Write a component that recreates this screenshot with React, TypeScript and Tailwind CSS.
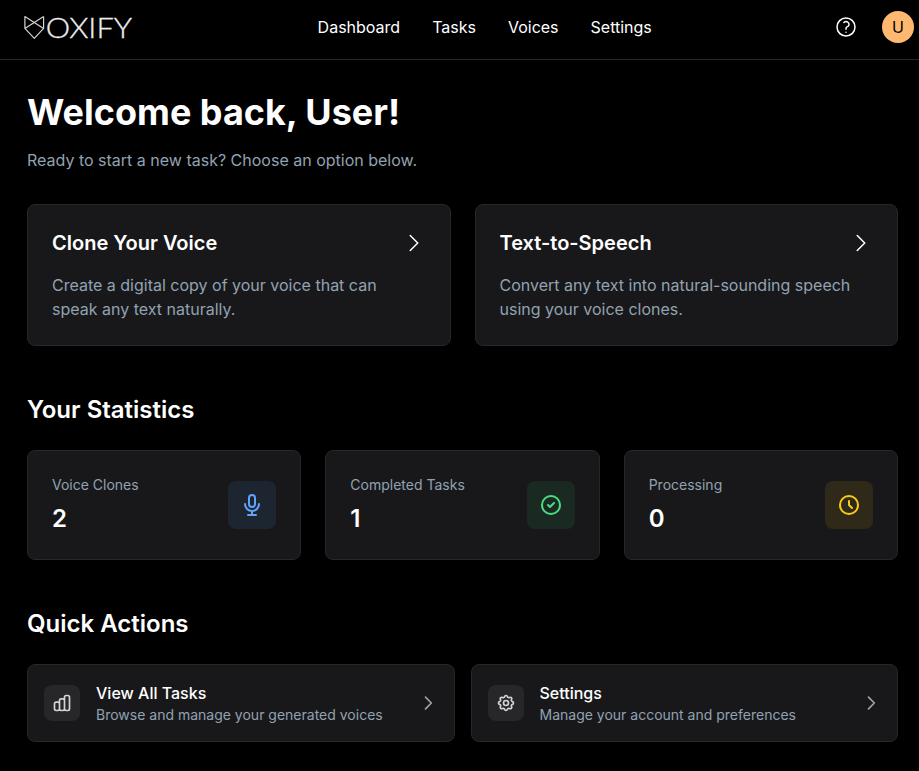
import React from "react";

type IconProps = { d: string | string[]; className?: string; strokeWidth?: number };

function Icon({ d, className = "size-6", strokeWidth = 2 }: IconProps) {
  const paths = Array.isArray(d) ? d : [d];
  return (
    <svg
      className={`shrink-0 ${className}`}
      viewBox="0 0 24 24"
      fill="none"
      stroke="currentColor"
      strokeWidth={strokeWidth}
      strokeLinecap="round"
      strokeLinejoin="round"
      aria-hidden="true"
    >
      {paths.map((p) => (
        <path key={p} d={p} />
      ))}
    </svg>
  );
}

const icons = {
  help: "M9.879 7.519c1.171-1.025 3.071-1.025 4.242 0 1.172 1.025 1.172 2.687 0 3.712-.203.179-.43.326-.67.442-.745.361-1.45.999-1.45 1.827v.75M21 12a9 9 0 1 1-18 0 9 9 0 0 1 18 0Zm-9 5.25h.008v.008H12v-.008Z",
  chevronWide: "M8.25 4.5l7.5 7.5-7.5 7.5",
  chevron: "M9 5l7 7-7 7",
  mic: "M19 11a7 7 0 01-7 7m0 0a7 7 0 01-7-7m7 7v4m0 0H8m4 0h4m-4-8a3 3 0 01-3-3V5a3 3 0 116 0v6a3 3 0 01-3 3z",
  check: "M9 12l2 2 4-4m6 2a9 9 0 11-18 0 9 9 0 0118 0z",
  clock: "M12 8v4l3 3m6-3a9 9 0 11-18 0 9 9 0 0118 0z",
  chart:
    "M9 19v-6a2 2 0 00-2-2H5a2 2 0 00-2 2v6a2 2 0 002 2h2a2 2 0 002-2zm0 0V9a2 2 0 012-2h2a2 2 0 012 2v10m-6 0a2 2 0 002 2h2a2 2 0 002-2m0 0V5a2 2 0 012-2h2a2 2 0 012 2v14a2 2 0 01-2 2h-2a2 2 0 01-2-2z",
  cog: [
    "M10.325 4.317c.426-1.756 2.924-1.756 3.35 0a1.724 1.724 0 002.573 1.066c1.543-.94 3.31.826 2.37 2.37a1.724 1.724 0 001.065 2.572c1.756.426 1.756 2.924 0 3.35a1.724 1.724 0 00-1.066 2.573c.94 1.543-.826 3.31-2.37 2.37a1.724 1.724 0 00-2.572 1.065c-.426 1.756-2.924 1.756-3.35 0a1.724 1.724 0 00-2.573-1.066c-1.543.94-3.31-.826-2.37-2.37a1.724 1.724 0 00-1.065-2.572c-1.756-.426-1.756-2.924 0-3.35a1.724 1.724 0 001.066-2.573c-.94-1.543.826-3.31 2.37-2.37.996.608 2.296.07 2.572-1.065z",
    "M15 12a3 3 0 11-6 0 3 3 0 016 0z",
  ],
};

const card = "rounded-lg border border-[#27272a] bg-[#18181b]";

const options = [
  { title: "Clone Your Voice", text: "Create a digital copy of your voice that can speak any text naturally." },
  { title: "Text-to-Speech", text: "Convert any text into natural-sounding speech using your voice clones." },
];

const stats = [
  { label: "Voice Clones", value: 2, icon: icons.mic, tone: "bg-[#1d2531] text-[#60a5fa]" },
  { label: "Completed Tasks", value: 1, icon: icons.check, tone: "bg-[#1a2a22] text-[#4ade80]" },
  { label: "Processing", value: 0, icon: icons.clock, tone: "bg-[#2f291a] text-[#facc15]" },
];

const actions = [
  { title: "View All Tasks", text: "Browse and manage your generated voices", icon: icons.chart },
  { title: "Settings", text: "Manage your account and preferences", icon: icons.cog },
];

function Logo() {
  return (
    <div className="flex w-[294px] items-center pl-6">
      <svg className="h-[26px] w-[21px] shrink-0" viewBox="0 0 21 26" fill="none" stroke="#d4d4d4" strokeWidth="1.2" strokeLinejoin="round" aria-hidden="true">
        <path d="M.9 2.6 19.6 14.4 10.3 24.3.9 14.4ZM19.6 2.6.9 14.4M19.6 2.6V14.4" />
      </svg>
      <svg className="h-9 w-[92px] shrink-0 overflow-visible" viewBox="0 0 92 36" aria-label="OXIFY">
        <text
          x="0.7"
          y="28.7"
          textLength="86.4"
          lengthAdjust="spacingAndGlyphs"
          className="fill-[#ededed] stroke-[#ededed] stroke-[0.3] font-['Lato',sans-serif] text-[27px] font-light"
        >
          OXIFY
        </text>
      </svg>
    </div>
  );
}

export default function App() {
  return (
    <div className="h-[771px] overflow-hidden bg-black font-['Inter','Liberation_Sans',sans-serif] text-white">
      <header className="flex h-[60px] items-center border-b border-[#27272a] pr-[5px] pb-[5px]">
        <Logo />
        <nav className="ml-[23.6px] flex gap-8 text-base font-[440]">
          {["Dashboard", "Tasks", "Voices", "Settings"].map((n) => (
            <a key={n}>{n}</a>
          ))}
        </nav>
        <div className="ml-auto flex items-center gap-6">
          <Icon d={icons.help} strokeWidth={1.5} />
          <div className="flex size-8 items-center justify-center rounded-full bg-[#ffb870] text-base text-black">U</div>
        </div>
      </header>

      <main className="pt-8 pr-[21px] pl-[27px]">
        <h1 className="mb-4 text-4xl font-bold">Welcome back, User!</h1>
        <p className="mb-8 text-[#92a2b0]">Ready to start a new task? Choose an option below.</p>

        <section className="mb-12 grid grid-cols-2 gap-6">
          {options.map((o) => (
            <div key={o.title} className={`${card} p-6`}>
              <div className="mb-4 flex items-center justify-between">
                <h2 className="text-xl font-semibold">{o.title}</h2>
                <Icon d={icons.chevronWide} strokeWidth={1.5} />
              </div>
              <p className="text-[#92a2b0]">{o.text}</p>
            </div>
          ))}
        </section>

        <section className="mb-12">
          <h2 className="mb-6 text-2xl font-semibold">Your Statistics</h2>
          <div className="grid grid-cols-3 gap-6">
            {stats.map((s) => (
              <div key={s.label} className={`${card} flex items-center justify-between p-6`}>
                <div>
                  <p className="mb-2 text-sm text-[#92a2b0]">{s.label}</p>
                  <p className="text-2xl font-semibold">{s.value}</p>
                </div>
                <div className={`flex size-12 items-center justify-center rounded-lg ${s.tone}`}>
                  <Icon d={s.icon} />
                </div>
              </div>
            ))}
          </div>
        </section>

        <section>
          <h2 className="mb-6 text-2xl font-semibold">Quick Actions</h2>
          <div className="grid grid-cols-2 gap-4">
            {actions.map((a) => (
              <div key={a.title} className={`${card} flex items-center gap-4 p-4`}>
                <div className="rounded-lg bg-[#27272a] p-2 text-[#d4d4d8]">
                  <Icon d={a.icon} className="size-5" />
                </div>
                <div className="flex-1">
                  <h3 className="font-medium">{a.title}</h3>
                  <p className="text-sm text-[#92a2b0]">{a.text}</p>
                </div>
                <Icon d={icons.chevron} className="size-5 text-[#a1a1aa]" />
              </div>
            ))}
          </div>
        </section>
      </main>
    </div>
  );
}
